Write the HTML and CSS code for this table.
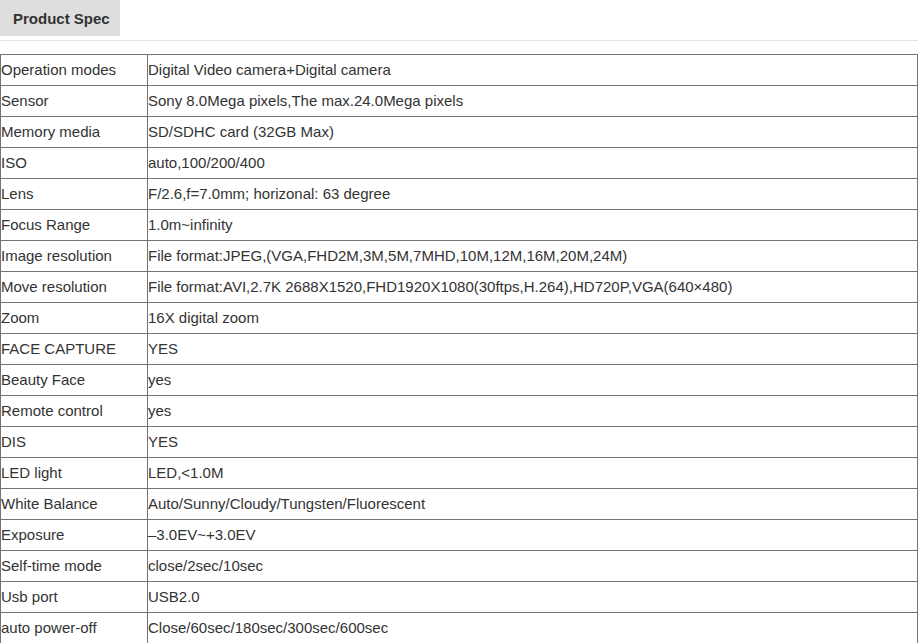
FILE: index.html
```html
<!DOCTYPE html>
<html>
<head>
<meta charset="utf-8">
<link rel="stylesheet" href="styles.css">
</head>
<body>
<div class="tabs">
  <div class="tab">Product Spec</div>
</div>
<table class="spec">
  <tr><td class="k">Operation modes</td><td>Digital Video camera+Digital camera</td></tr>
  <tr><td class="k">Sensor</td><td>Sony 8.0Mega pixels,The max.24.0Mega pixels</td></tr>
  <tr><td class="k">Memory media</td><td>SD/SDHC card (32GB Max)</td></tr>
  <tr><td class="k">ISO</td><td>auto,100/200/400</td></tr>
  <tr><td class="k">Lens</td><td>F/2.6,f=7.0mm; horizonal: 63 degree</td></tr>
  <tr><td class="k">Focus Range</td><td>1.0m~infinity</td></tr>
  <tr><td class="k">Image resolution</td><td>File format:JPEG,(VGA,FHD2M,3M,5M,7MHD,10M,12M,16M,20M,24M)</td></tr>
  <tr><td class="k">Move resolution</td><td>File format:AVI,2.7K 2688X1520,FHD1920X1080(30ftps,H.264),HD720P,VGA(640×480)</td></tr>
  <tr><td class="k">Zoom</td><td>16X digital zoom</td></tr>
  <tr><td class="k">FACE CAPTURE</td><td>YES</td></tr>
  <tr><td class="k">Beauty Face</td><td>yes</td></tr>
  <tr><td class="k">Remote control</td><td>yes</td></tr>
  <tr><td class="k">DIS</td><td>YES</td></tr>
  <tr><td class="k">LED light</td><td>LED,&lt;1.0M</td></tr>
  <tr><td class="k">White Balance</td><td>Auto/Sunny/Cloudy/Tungsten/Fluorescent</td></tr>
  <tr><td class="k">Exposure</td><td>–3.0EV~+3.0EV</td></tr>
  <tr><td class="k">Self-time mode</td><td>close/2sec/10sec</td></tr>
  <tr><td class="k">Usb port</td><td>USB2.0</td></tr>
  <tr><td class="k">auto power-off</td><td>Close/60sec/180sec/300sec/600sec</td></tr>
</table>
</body>
</html>
```
FILE: styles.css
```css
html, body {
  margin: 0;
  padding: 0;
  background: #fff;
  font-family: "Liberation Sans", Arial, sans-serif;
  color: #333;
}
.tabs {
  display: flex;
  border-bottom: 1px solid #e3e3e3;
  margin-right: 1px;
  padding-bottom: 4px;
  margin-bottom: 13px;
}
.tab {
  background: #dedede;
  width: 120px;
  height: 36px;
  box-sizing: border-box;
  padding-left: 13px;
  display: flex;
  align-items: center;
  font-weight: bold;
  font-size: 15px;
  color: #333;
}
.spec {
  border-collapse: collapse;
  width: 918px;
  font-size: 15px;
}
.spec td {
  border: 1px solid #767272;
  height: 31px;
  padding: 0 0 2px 0;
  box-sizing: border-box;
  white-space: nowrap;
  vertical-align: middle;
}
.spec td.k {
  width: 147px;
}
```
